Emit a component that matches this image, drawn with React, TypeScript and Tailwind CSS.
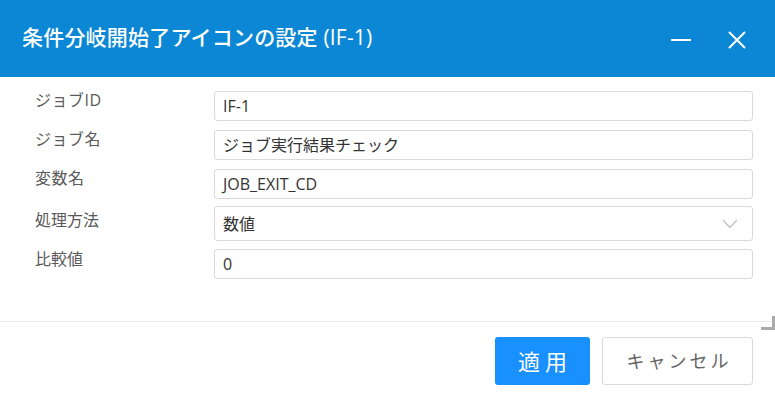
import React from 'react';

const FONT = { fontFamily: '"Open Sans", "Noto Sans CJK JP", sans-serif' };

const rows = [
  { label: 'ジョブID', value: 'IF-1', mt: 'mt-[14px]' },
  { label: 'ジョブ名', value: 'ジョブ実行結果チェック', mt: 'mt-[9px]' },
  { label: '変数名', value: 'JOB_EXIT_CD', mt: 'mt-[9px]' },
];

export default function App() {
  return (
    <div className="w-[775px] h-[398px] bg-white relative overflow-hidden" style={FONT}>
      {/* Header */}
      <div className="h-[77px] bg-[#0b87d6] flex items-center pl-[22px] pr-[28px]">
        <h1 className="text-white text-[21px] font-medium tracking-[0.2px] flex-1 pb-[2px]">
          条件分岐開始了アイコンの設定 (IF-1)
        </h1>
        <div className="flex items-center gap-[36px]">
          <div className="w-[20px] h-[2px] bg-white mt-[2px]" />
          <svg width="20" height="20" viewBox="0 0 20 20" className="mt-[2px]">
            <path d="M2 2 L18 18 M18 2 L2 18" stroke="white" strokeWidth="2" />
          </svg>
        </div>
      </div>

      {/* Form */}
      <div className="pl-[35px] pr-[22px]">
        {rows.map((r) => (
          <div key={r.label} className={`flex ${r.mt}`}>
            <div className="w-[179px] text-[16px] text-[#595959] leading-[22px] -mt-[2px] tracking-[0.5px]">{r.label}</div>
            <div className="flex-1 h-[30px] border border-[#d9d9d9] rounded-[3px] px-[8px] flex items-center text-[16px] text-[#333]">
              {r.value}
            </div>
          </div>
        ))}
        <div className="flex mt-[7px]">
          <div className="w-[179px] text-[16px] text-[#595959] leading-[22px] pt-[3px]">処理方法</div>
          <div className="flex-1 h-[35px] border border-[#d9d9d9] rounded-[3px] pl-[8px] pr-[14px] flex items-center justify-between text-[16px] text-[#333]">
            <span>数値</span>
            <svg width="16" height="10" viewBox="0 0 16 10">
              <path d="M1 1 L8 8.5 L15 1" fill="none" stroke="#bfbfbf" strokeWidth="1.2" />
            </svg>
          </div>
        </div>
        <div className="flex mt-[8px]">
          <div className="w-[179px] text-[16px] text-[#595959] leading-[22px] -mt-[1px]">比較値</div>
          <div className="flex-1 h-[30px] border border-[#d9d9d9] rounded-[3px] px-[8px] flex items-center text-[16px] text-[#333]">
            0
          </div>
        </div>
      </div>

      {/* Footer */}
      <div className="mt-[42px] border-t border-[#ebebeb]" />
      <div className="flex justify-end gap-[12px] pr-[22px] pt-[15px]">
        <button className="w-[95px] h-[48px] bg-[#1890ff] rounded-[3px] text-white text-[22px] tracking-[5px] pl-[5px]">
          適用
        </button>
        <button className="w-[151px] h-[48px] bg-white border border-[#d9d9d9] rounded-[3px] text-[#666] text-[18px] tracking-[3px] pl-[3px]">
          キャンセル
        </button>
      </div>

      {/* Resize grip */}
      <div className="absolute right-0 top-[316px] w-[14px] h-[14px]">
        <div className="absolute right-0 top-0 w-[3px] h-[14px] bg-[#aaa]" />
        <div className="absolute right-0 bottom-0 w-[14px] h-[3px] bg-[#aaa]" />
      </div>
    </div>
  );
}
